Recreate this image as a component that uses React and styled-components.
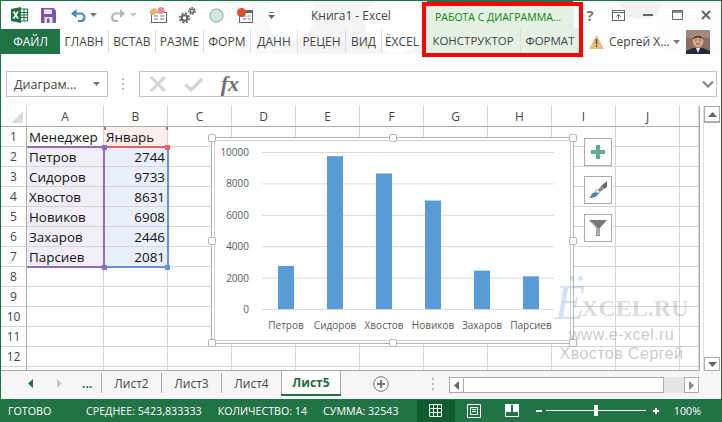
import React from 'react';
import styled, { createGlobalStyle } from 'styled-components';

const green = '#217346';
const ui = '"Open Sans", "Noto Sans", sans-serif';

const GlobalStyle = createGlobalStyle`
  html, body { margin: 0; padding: 0; background: #fff; }
  * { box-sizing: border-box; }
`;

const Page = styled.div`
  width: 722px;
  height: 422px;
  display: flex;
  flex-direction: column;
  overflow: hidden;
  border: 1px solid ${green};
  border-bottom: none;
  font-family: ${ui};
  color: #444;
  background: #fff;
`;

const Header = styled.header`
  display: flex;
  height: 53px;
  flex: none;
  background:
    radial-gradient(circle at 290px 14px, #fff 0 24px, transparent 25px),
    radial-gradient(circle at 395px 22px, #fff 0 30px, transparent 31px),
    radial-gradient(circle at 640px -4px, #f1f1f1 0 22px, transparent 23px),
    radial-gradient(ellipse at 690px 60px, #f2f2f2 0 40px, transparent 41px),
    linear-gradient(to right, #fff 210px, #f5f5f5 300px, #f4f4f4 420px, #fff 560px, #fbfbfb);
`;

const HeaderLeft = styled.div`
  width: 421px;
  display: flex;
  flex-direction: column;
`;

const TitleRow = styled.div`
  height: 28px;
  display: flex;
  align-items: center;
  padding-left: 10px;
`;

const Qat = styled.div`
  display: flex;
  align-items: center;
  width: 300px;
  flex: none;
`;

const QatSlot = styled.span`
  display: flex;
  align-items: center;
  margin-left: ${p => p.$gap || 0}px;
  flex: none;
`;

const WindowTitle = styled.div`
  font-size: 12px;
  color: #444;
  white-space: nowrap;
`;

const TabRow = styled.nav`
  height: 25px;
  display: flex;
  align-items: center;
`;

const FileTab = styled.div`
  width: 59px;
  height: 25px;
  display: flex;
  align-items: center;
  justify-content: center;
  background: ${green};
  color: #fff;
  font-size: 12px;
`;

const Tab = styled.div`
  height: 23px;
  width: ${p => p.$w}px;
  flex: none;
  display: flex;
  align-items: center;
  justify-content: center;
  font-size: 12px;
  color: #444;
  white-space: nowrap;
  border-right: ${p => (p.$last ? 'none' : '1px solid #dcdcdc')};
`;

const ContextTab = styled(Tab)`
  font-size: 11.5px;
`;

const ContextGroup = styled.div`
  position: relative;
  width: 161px;
  height: 55px;
  margin-top: 1px;
  flex: none;
  border: 4px solid #f00;
  display: flex;
  flex-direction: column;
  background: #fff;
  z-index: 2;

  &::before {
    content: '';
    position: absolute;
    left: 1px;
    right: 6px;
    top: -6px;
    height: 2px;
    background: ${green};
  }
`;

const ContextTitle = styled.div`
  height: 22px;
  margin-right: 5px;
  padding-left: 9px;
  display: flex;
  align-items: center;
  background: #e6f1e6;
  color: #0a870a;
  font-size: 10.5px;
  white-space: nowrap;
`;

const ContextTabs = styled.div`
  flex: 1;
  display: flex;
  align-items: center;
  background: #e6f1e6;
`;

const HeaderRight = styled.div`
  flex: 1;
  display: flex;
  flex-direction: column;
`;

const WindowButtons = styled.div`
  height: 28px;
  display: flex;
  align-items: center;
`;

const WindowButton = styled.span`
  display: flex;
  align-items: center;
  justify-content: center;
  width: ${p => p.$w}px;
  flex: none;
  color: #777;
  font-size: 15px;
  font-weight: 700;
`;

const UserRow = styled.div`
  height: 25px;
  display: flex;
  align-items: center;
  padding-left: 6px;
`;

const UserName = styled.span`
  font-size: 12px;
  margin-left: 5px;
  width: 64px;
  white-space: nowrap;
  color: #444;
`;

const PortraitBox = styled.span`
  display: flex;
  margin-left: 6px;
`;

const FormulaRow = styled.div`
  height: 26px;
  flex: none;
  margin: 17px 4px 0 5px;
  display: flex;
  align-items: stretch;
`;

const NameBox = styled.div`
  width: 102px;
  flex: none;
  display: flex;
  align-items: center;
  justify-content: space-between;
  padding: 0 7px;
  border: 1px solid #c6c6c6;
  font-size: 12.5px;
  color: #444;
`;

const Grip = styled.div`
  width: 31px;
  flex: none;
  display: flex;
  align-items: center;
  justify-content: center;
`;

const FormulaTools = styled.div`
  width: 110px;
  flex: none;
  display: flex;
  align-items: center;
  justify-content: space-between;
  padding: 0 9px 0 9px;
  border: 1px solid #c6c6c6;
`;

const FxLabel = styled.span`
  font-family: "Liberation Serif", serif;
  font-style: italic;
  font-weight: 700;
  font-size: 22px;
  color: #6f6f6f;
  line-height: 1;
`;

const FormulaInput = styled.div`
  flex: 1;
  margin-left: 4px;
  display: flex;
  align-items: center;
  justify-content: flex-end;
  padding-right: 2px;
  border: 1px solid #c6c6c6;
`;

const Workspace = styled.div`
  height: 265px;
  margin-top: 9px;
  flex: none;
  display: flex;
`;

const Sheet = styled.div`
  position: relative;
  width: 699px;
  flex: none;
  overflow: hidden;
  border-right: 1px solid #ababab;
  border-bottom: 1px solid #ababab;
  font-size: 13.4px;
`;

const HeadRow = styled.div`
  display: flex;
  height: 21px;
  border-bottom: 1px solid #ababab;
`;

const Corner = styled.div`
  width: 26px;
  flex: none;
  display: flex;
  align-items: flex-end;
  justify-content: flex-end;
  padding: 0 3px 3px 0;
  border-right: 1px solid #d4d4d4;
`;

const ColHead = styled.div`
  width: ${p => p.$w}px;
  flex: none;
  display: flex;
  align-items: center;
  justify-content: center;
  font-size: 12px;
  color: #444;
  border-right: 1px solid #d4d4d4;
`;

const Row = styled.div`
  display: flex;
  height: 20px;
`;

const RowHead = styled.div`
  width: 26px;
  flex: none;
  display: flex;
  align-items: center;
  justify-content: center;
  font-size: 12px;
  color: #444;
  border-right: 1px solid #ababab;
  border-bottom: 1px solid #d4d4d4;
`;

const Cell = styled.div`
  width: ${p => p.$w}px;
  flex: none;
  padding: 0 2px;
  display: flex;
  align-items: center;
  justify-content: ${p => (p.$num ? 'flex-end' : 'flex-start')};
  background: ${p => p.$tint || '#fff'};
  color: #111;
  white-space: nowrap;
  border-right: 1px solid #d4d4d4;
  border-bottom: 1px solid #d4d4d4;
`;

const MarkLine = styled.div`
  position: absolute;
  left: ${p => p.$x}px;
  top: ${p => p.$y}px;
  width: ${p => p.$w}px;
  height: ${p => p.$h}px;
  background: ${p => p.$c};
`;

const ChartFrame = styled.div`
  position: absolute;
  left: 210px;
  top: 31px;
  width: 363px;
  height: 207px;
  border: 1px solid #b4b4b4;
  padding: 2px;
  background: #fff;
`;

const ChartInner = styled.div`
  width: 100%;
  height: 100%;
  border: 1px solid #cfcfcf;
  background: #fff;

  svg { display: block; }
  text { font-family: ${ui}; font-size: 10px; fill: #595959; }
`;

const Handle = styled.span`
  position: absolute;
  left: ${p => p.$x}%;
  top: ${p => p.$y}%;
  width: 8px;
  height: 8px;
  margin: -4px 0 0 -4px;
  background: #fff;
  border: 1px solid #b4b4b4;
  border-radius: 2px;
`;

const ChartTools = styled.div`
  position: absolute;
  left: 583px;
  top: 32px;
  display: flex;
  flex-direction: column;
  gap: 10px;
`;

const ToolButton = styled.div`
  width: 28px;
  height: 28px;
  display: flex;
  align-items: center;
  justify-content: center;
  background: #fff;
  border: 1px solid #ababab;
`;

const Watermark = styled.div`
  position: absolute;
  left: 553px;
  top: 177px;
  width: 135px;
  display: flex;
  flex-direction: column;
  align-items: center;
  pointer-events: none;
`;

const WatermarkLogo = styled.div`
  display: flex;
  align-items: flex-end;
  height: 42px;
  font-family: "Liberation Serif", serif;
  font-weight: 700;
  font-size: 24px;
  color: rgba(150, 150, 150, 0.35);
  white-space: nowrap;

  b {
    font-size: 50px;
    line-height: 46px;
    font-style: italic;
    font-weight: 400;
    color: rgba(120, 165, 215, 0.32);
    margin-right: -4px;
  }

  span {
    line-height: 1;
    margin-bottom: 5px;
  }
`;

const WatermarkLine = styled.div`
  font-family: "Liberation Sans", sans-serif;
  font-size: 16px;
  letter-spacing: 0.45px;
  line-height: 19px;
  color: rgba(150, 150, 150, 0.5);
  white-space: nowrap;
`;

const VScroll = styled.div`
  flex: 1;
  margin-left: 3px;
  margin-right: 1px;
  display: flex;
  flex-direction: column;
  border-left: 1px solid #dcdcdc;
`;

const ScrollButton = styled.div`
  width: ${p => p.$w || 16}px;
  height: ${p => p.$h || 16}px;
  flex: none;
  display: flex;
  align-items: center;
  justify-content: center;
  background: #fff;
  border: 1px solid #ababab;
`;

const VThumb = styled.div`
  flex: 1;
  border-top: 1px solid #ababab;
  background: #fff;
`;

const SheetBar = styled.div`
  height: 28px;
  flex: none;
  display: flex;
  align-items: flex-start;
  background: #f6f6f6;
`;

const SheetNav = styled.div`
  width: 100px;
  height: 24px;
  flex: none;
  display: flex;
  align-items: center;
  padding-left: 27px;
  gap: 24px;
  color: ${green};
  font-size: 12px;

  b { margin-left: -4px; }
`;

const SheetTab = styled.div`
  width: 60px;
  flex: none;
  height: ${p => (p.$active ? 25 : 20)}px;
  margin-top: ${p => (p.$active ? 0 : 2)}px;
  display: flex;
  align-items: center;
  justify-content: center;
  font-size: 12px;
  font-weight: ${p => (p.$active ? 700 : 400)};
  color: ${p => (p.$active ? '#1e6b3f' : '#444')};
  background: ${p => (p.$active ? '#fff' : 'transparent')};
  border-left: ${p => (p.$active ? 'none' : '1px solid #ababab')};
  border-bottom: ${p => (p.$active ? `2px solid ${green}` : 'none')};
  box-shadow: ${p => (p.$active ? 'inset 1px 0 #ababab, inset -1px 0 #ababab' : 'none')};
`;

const SheetBarTools = styled.div`
  width: 108px;
  height: 26px;
  flex: none;
  display: flex;
  align-items: center;
  padding-left: 32px;
  gap: 43px;
`;

const HScroll = styled.div`
  width: 250px;
  height: 16px;
  margin-top: 6px;
  flex: none;
  display: flex;
  background: #e6e6e6;
`;

const HThumb = styled.div`
  width: 200px;
  background: #fff;
  border-top: 1px solid #ababab;
  border-bottom: 1px solid #ababab;
  border-right: 1px solid #ababab;
`;

const HTrack = styled.div`
  flex: 1;
`;

const StatusBar = styled.footer`
  height: 23px;
  flex: none;
  margin: 0 -1px;
  display: flex;
  align-items: center;
  background: ${green};
  color: #fff;
  font-size: 10.7px;
  white-space: nowrap;
`;

const StatusReady = styled.span`
  width: 86px;
  padding-left: 8px;
  flex: none;
`;

const StatusItem = styled.span`
  margin-right: 16px;
`;

const ViewGroup = styled.div`
  margin-left: auto;
  display: flex;
  align-items: stretch;
  height: 22px;
`;

const ViewButton = styled.div`
  width: 38px;
  display: flex;
  align-items: center;
  justify-content: center;
  background: ${p => (p.$active ? '#0e5c2f' : 'transparent')};
`;

const Zoom = styled.div`
  display: flex;
  align-items: center;
  width: 123px;
  margin-left: 5px;
  height: 22px;
`;

const ZoomTrack = styled.div`
  position: relative;
  width: 100px;
  height: 1px;
  margin: 0 7px 0 4px;
  background: #fff;
`;

const ZoomThumb = styled.span`
  position: absolute;
  left: 48px;
  top: -5px;
  width: 4px;
  height: 11px;
  background: #fff;
`;

const ZoomSign = styled.span`
  width: 6px;
  height: 2px;
  background: #fff;
  position: relative;

  &::after {
    content: '';
    display: ${p => (p.$plus ? 'block' : 'none')};
    position: absolute;
    left: 2px;
    top: -2px;
    width: 2px;
    height: 6px;
    background: #fff;
  }
`;

const ZoomValue = styled.span`
  margin: 0 21px 0 15px;
`;

const Caret = ({ color = '#777' }) => (
  <svg width="7" height="4" viewBox="0 0 7 4"><path d="M0 0h7L3.5 4z" fill={color} /></svg>
);

const ExcelIcon = () => (
  <svg width="17" height="16" viewBox="0 0 17 16">
    <path d="M0 2 10 0v16L0 14z" fill="#1e7145" />
    <path d="M10 2h6.500v12H10" fill="#fff" stroke="#1e7145" />
    <path d="M10 5.500h6M10 8h6M10 10.500h6M13 2v12" stroke="#1e7145" />
    <path d="M2.500 4.500 7 11.500M7 4.500 2.500 11.500" stroke="#fff" strokeWidth="1.600" />
  </svg>
);

const SaveIcon = () => (
  <svg width="15" height="15" viewBox="0 0 15 15">
    <path d="M0 0h12.500L15 2.500V15H0z" fill="#7d55a8" />
    <rect x="3" y="1.500" width="8" height="4.500" fill="#e9e0f2" />
    <rect x="3.500" y="9" width="8" height="6" fill="#e9e0f2" />
    <rect x="6" y="10.500" width="2.500" height="4.500" fill="#7d55a8" />
  </svg>
);

const UndoIcon = ({ color }) => (
  <svg width="17" height="13" viewBox="0 0 17 13">
    <path d="M2.500 4.500h8a4 4 0 0 1 4 4 4 4 0 0 1-4 3.500H8" fill="none" stroke={color} strokeWidth="2.200" />
    <path d="M6.500 0v9L1 4.500z" fill={color} />
  </svg>
);

const RedoIcon = ({ color }) => (
  <svg width="16" height="13" viewBox="0 0 16 13">
    <path d="M13 4.500H6a4 4 0 0 0-4 4 4 4 0 0 0 4 3.500h2" fill="none" stroke={color} strokeWidth="2.200" />
    <path d="M10 0v9l5-4.500z" fill={color} />
  </svg>
);

const FormIcon = () => (
  <svg width="17" height="16" viewBox="0 0 17 16">
    <rect x="1.500" y="5.500" width="15" height="10" fill="#fff" stroke="#6a6a6a" />
    <path d="M4 9h4M10 9h4M4 12h4M10 12h4" stroke="#777" />
    <path d="M0 3.500 4 1l3 1.500V6L3 8.500 0 6.500z" fill="#e8b869" />
    <circle cx="11" cy="3.500" r="3.500" fill="#ec8ba0" />
  </svg>
);

const GearsIcon = () => (
  <svg width="17" height="17" viewBox="0 0 17 17" fill="none" stroke="#666">
    <circle cx="5.500" cy="11" r="2.800" strokeWidth="2" />
    <circle cx="5.500" cy="11" r="4.600" strokeWidth="1.800" strokeDasharray="2.100 1.500" />
    <circle cx="13" cy="4" r="1.800" strokeWidth="1.500" />
    <circle cx="13" cy="4" r="3.200" strokeWidth="1.500" strokeDasharray="1.700 1.100" />
  </svg>
);

const CircleIcon = () => (
  <svg width="15" height="15" viewBox="0 0 15 15">
    <circle cx="7.500" cy="7.500" r="6.500" fill="#d5e6dc" stroke="#6fae93" />
  </svg>
);

const RecordIcon = () => (
  <svg width="16" height="15" viewBox="0 0 16 15">
    <rect x="2.500" y="2.500" width="13" height="12" fill="#fff" stroke="#666" />
    <rect x="2" y="2" width="14" height="3" fill="#666" />
    <path d="M6 8h3M10.500 8h3M6 11h3M10.500 11h3" stroke="#777" />
    <circle cx="4.500" cy="4.500" r="4.500" fill="#d9502e" />
  </svg>
);

const CustomizeIcon = () => (
  <svg width="7" height="7" viewBox="0 0 7 7">
    <path d="M1 .5h5" stroke="#666" />
    <path d="M0 3h7L3.500 7z" fill="#666" />
  </svg>
);

const PinIcon = () => (
  <svg width="13" height="11" viewBox="0 0 13 11" fill="none" stroke="#666">
    <rect x=".5" y=".5" width="12" height="10" />
    <path d="M.5 2.500h12" />
    <path d="M6.500 9V4.500M4.500 6.500l2-2 2 2" />
  </svg>
);

const WarnIcon = () => (
  <svg width="15" height="14" viewBox="0 0 15 14">
    <path d="M7.500 0 15 14H0z" fill="#e8bd7c" />
    <path d="M6.700 4h1.600v5.500H6.700zM6.700 10.500h1.600V12H6.700z" fill="#555" />
  </svg>
);

const Portrait = () => (
  <svg width="24" height="24" viewBox="0 0 24 24">
    <rect width="24" height="24" fill="#8a6d60" />
    <rect width="24" height="8" fill="#a08a7c" />
    <path d="M0 24v-3l7-3h10l7 3v3z" fill="#1f2a3a" />
    <path d="M10 18h4l-2 5z" fill="#e8e8ee" />
    <ellipse cx="12" cy="11" rx="5.500" ry="6.500" fill="#d7a68c" />
    <path d="M6.500 10c0-6 11-6 11 0-2-3-9-3-11 0z" fill="#5a4030" />
    <path d="M9 10h2M13 10h2M10 14h4" stroke="#6c4636" strokeWidth=".8" />
  </svg>
);

const CrossIcon = () => (
  <svg width="18" height="16" viewBox="0 0 18 16">
    <path d="M2 1l14 14M16 1 2 15" stroke="#d4d4d4" strokeWidth="3" />
  </svg>
);

const CheckIcon = () => (
  <svg width="19" height="15" viewBox="0 0 19 15">
    <path d="M1.500 7.500 7 13 18 2" fill="none" stroke="#d4d4d4" strokeWidth="3.400" />
  </svg>
);

const PlusIcon = () => (
  <svg width="14" height="14" viewBox="0 0 14 14">
    <path d="M5 0h4v5h5v4H9v5H5V9H0V5h5z" fill="#5fa98c" />
  </svg>
);

const BrushIcon = () => (
  <svg width="18" height="18" viewBox="0 0 18 18">
    <path d="M18 0v6l-3 2-3-3z" fill="#666" />
    <path d="M12 5l3 3-4 3-2-2z" fill="#8c8c8c" />
    <path d="M8 10c1-1 3 1 2 2-1 3-5 5-10 5 2-1 2-4 4-5 1-1 3 0 4-2z" fill="#4f81bd" />
    <circle cx="8.500" cy="10.500" r="1.800" fill="#fff" stroke="#777" strokeWidth=".8" />
  </svg>
);

const FunnelIcon = () => (
  <svg width="18" height="16" viewBox="0 0 18 16">
    <path d="M0 0h18l-7 8v8H7V8z" fill="#777" />
    <path d="M3 2.500 8 8v7h2V8" fill="none" stroke="#ddd" strokeWidth=".9" />
  </svg>
);

const ArrowIcon = ({ dir, color = '#666' }) => {
  const d = { up: 'M0 5 4.500 0 9 5z', down: 'M0 0h9L4.500 5z', left: 'M5 0v9L0 4.500z', right: 'M0 0v9l5-4.500z' }[dir];
  const vertical = dir === 'up' || dir === 'down';
  return (
    <svg width={vertical ? 9 : 5} height={vertical ? 5 : 9} viewBox={vertical ? '0 0 9 5' : '0 0 5 9'}>
      <path d={d} fill={color} />
    </svg>
  );
};

const AddSheetIcon = () => (
  <svg width="16" height="16" viewBox="0 0 16 16" fill="none" stroke="#777">
    <circle cx="8" cy="8" r="7.300" />
    <path d="M8 4v8M4 8h8" strokeWidth="2" />
  </svg>
);

const Dots = () => (
  <svg width="3" height="12" viewBox="0 0 3 12" fill="#bdbdbd">
    <rect y="0" width="2" height="2" /><rect y="5" width="2" height="2" /><rect y="10" width="2" height="2" />
  </svg>
);

const GridView = () => (
  <svg width="13" height="13" viewBox="0 0 13 13" fill="none" stroke="#fff">
    <path d="M.5.5h12v12H.5zM4.500.5v12M8.500.5v12M.5 4.500h12M.5 8.500h12" />
  </svg>
);

const PageView = () => (
  <svg width="14" height="14" viewBox="0 0 14 14" fill="none" stroke="#fff">
    <path d="M.5.5h13v13H.5zM3.500 3.500h7v7h-7zM5 5.500h4M5 7.500h4" />
  </svg>
);

const BreakView = () => (
  <svg width="14" height="13" viewBox="0 0 14 13">
    <path d="M.5.5h13v12H.5z" fill="none" stroke="#fff" />
    <path d="M1 1h5v7H1zM8 1h5v7H8z" fill="#fff" />
  </svg>
);

const columns = [
  ['A', 77], ['B', 64], ['C', 64], ['D', 64], ['E', 64], ['F', 64],
  ['G', 64], ['H', 64], ['I', 64], ['J', 64], ['', 19],
];

const people = [
  ['Менеджер', 'Январь'],
  ['Петров', 2744],
  ['Сидоров', 9733],
  ['Хвостов', 8631],
  ['Новиков', 6908],
  ['Захаров', 2446],
  ['Парсиев', 2081],
];

const series = people.slice(1);

const tint = (col, row) => {
  if (row > 6) return null;
  if (col === 0) return row === 0 ? null : '#f1eef8';
  if (col === 1) return row === 0 ? '#fdeeee' : '#e9f0fb';
  return null;
};

const marks = [
  ['#8e6cc0', 26, 40, 77, 2], ['#8e6cc0', 26, 160, 77, 2], ['#8e6cc0', 102, 44, 2, 116],
  ['#e2626a', 106, 40, 61, 2], ['#e2626a', 103, 21, 2, 3], ['#e2626a', 165, 21, 2, 3],
  ['#6a8fdf', 106, 160, 61, 2], ['#6a8fdf', 166, 44, 2, 116],
  ['#8e6cc0', 101, 39, 5, 5], ['#8e6cc0', 101, 159, 5, 5],
  ['#e2626a', 164, 39, 5, 5], ['#6a8fdf', 164, 159, 5, 5],
];

const handles = [[0, 0], [50, 0], [100, 0], [0, 50], [100, 50], [0, 100], [50, 100], [100, 100]];

const sheetTabs = ['Лист2', 'Лист3', 'Лист4'];

function Chart() {
  const base = 309;
  const scale = 157 / 10000;
  return (
    <svg width="355" height="199" viewBox="215 141 355 199">
      {[0, 2000, 4000, 6000, 8000, 10000].map(v => {
        const y = base - v * scale;
        return (
          <g key={v}>
            <path d={`M262 ${y + 0.5}H554`} stroke="#d9d9d9" />
            <text x="249" y={y + 4} textAnchor="end">{v}</text>
          </g>
        );
      })}
      {series.map(([name, value], i) => (
        <g key={name}>
          <rect x={278 + 49 * i} y={base - value * scale} width="16" height={value * scale} fill="#5b9bd5" />
          <text x={286 + 49 * i} y="329" textAnchor="middle">{name}</text>
        </g>
      ))}
    </svg>
  );
}

export default function App() {
  return (
    <Page>
      <GlobalStyle />
      <Header>
        <HeaderLeft>
          <TitleRow>
            <Qat>
              <QatSlot><ExcelIcon /></QatSlot>
              <QatSlot $gap={13}><SaveIcon /></QatSlot>
              <QatSlot $gap={14}><UndoIcon color="#4a86c5" /></QatSlot>
              <QatSlot $gap={3}><Caret /></QatSlot>
              <QatSlot $gap={13}><RedoIcon color="#b8b8b8" /></QatSlot>
              <QatSlot $gap={4}><Caret color="#c4c4c4" /></QatSlot>
              <QatSlot $gap={13}><FormIcon /></QatSlot>
              <QatSlot $gap={12}><GearsIcon /></QatSlot>
              <QatSlot $gap={13}><CircleIcon /></QatSlot>
              <QatSlot $gap={13}><RecordIcon /></QatSlot>
              <QatSlot $gap={15}><CustomizeIcon /></QatSlot>
            </Qat>
            <WindowTitle>Книга1 - Excel</WindowTitle>
          </TitleRow>
          <TabRow>
            <FileTab>ФАЙЛ</FileTab>
            <Tab $w={49}>ГЛАВН</Tab>
            <Tab $w={47}>ВСТАВ</Tab>
            <Tab $w={48}>РАЗМЕ</Tab>
            <Tab $w={47}>ФОРМ</Tab>
            <Tab $w={47}>ДАНН</Tab>
            <Tab $w={48}>РЕЦЕН</Tab>
            <Tab $w={36}>ВИД</Tab>
            <Tab $w={40} $last>ЁXCEL</Tab>
          </TabRow>
        </HeaderLeft>
        <ContextGroup>
          <ContextTitle>РАБОТА С ДИАГРАММА...</ContextTitle>
          <ContextTabs>
            <ContextTab $w={95}>КОНСТРУКТОР</ContextTab>
            <ContextTab $w={58} $last>ФОРМАТ</ContextTab>
          </ContextTabs>
        </ContextGroup>
        <HeaderRight>
          <WindowButtons>
            <WindowButton $w={14}>?</WindowButton>
            <WindowButton $w={42}><PinIcon /></WindowButton>
            <WindowButton $w={18}>
              <svg width="10" height="2"><rect width="10" height="2" fill="#666" /></svg>
            </WindowButton>
            <WindowButton $w={40}>
              <svg width="11" height="10" fill="none" stroke="#666">
                <path d="M.5.5h10v9H.5z" /><path d="M0 2h11" strokeWidth="1.500" />
              </svg>
            </WindowButton>
            <WindowButton $w={18}>
              <svg width="10" height="10"><path d="M1 1l8 8M9 1 1 9" stroke="#666" strokeWidth="2" /></svg>
            </WindowButton>
          </WindowButtons>
          <UserRow>
            <WarnIcon />
            <UserName>Сергей Х...</UserName>
            <Caret />
            <PortraitBox><Portrait /></PortraitBox>
          </UserRow>
        </HeaderRight>
      </Header>

      <FormulaRow>
        <NameBox>
          Диаграм...
          <Caret />
        </NameBox>
        <Grip><Dots /></Grip>
        <FormulaTools>
          <CrossIcon />
          <CheckIcon />
          <FxLabel>fx</FxLabel>
        </FormulaTools>
        <FormulaInput>
          <svg width="12" height="9" viewBox="0 0 12 9">
            <path d="M1 1.500 6 6.500l5-5" fill="none" stroke="#8a8a8a" strokeWidth="2.400" />
          </svg>
        </FormulaInput>
      </FormulaRow>

      <Workspace>
        <Sheet>
          <HeadRow>
            <Corner>
              <svg width="12" height="12"><path d="M12 0v12H0z" fill="#dcdcdc" /></svg>
            </Corner>
            {columns.map(([name, w]) => <ColHead key={w + name} $w={w}>{name}</ColHead>)}
          </HeadRow>
          {Array.from({ length: 13 }, (_, r) => (
            <Row key={r}>
              <RowHead>{r < 12 ? r + 1 : ''}</RowHead>
              {columns.map(([name, w], c) => {
                const value = people[r] && c < 2 ? people[r][c] : '';
                return (
                  <Cell key={w + name} $w={w} $tint={tint(c, r)} $num={typeof value === 'number'}>
                    {value}
                  </Cell>
                );
              })}
            </Row>
          ))}
          {marks.map(([c, x, y, w, h]) => (
            <MarkLine key={`${x}-${y}-${c}`} $c={c} $x={x} $y={y} $w={w} $h={h} />
          ))}
          <ChartFrame>
            <ChartInner><Chart /></ChartInner>
            {handles.map(([x, y]) => <Handle key={`${x}-${y}`} $x={x} $y={y} />)}
          </ChartFrame>
          <ChartTools>
            <ToolButton><PlusIcon /></ToolButton>
            <ToolButton><BrushIcon /></ToolButton>
            <ToolButton><FunnelIcon /></ToolButton>
          </ChartTools>
          <Watermark>
            <WatermarkLogo><b>Ё</b><span>XCEL.RU</span></WatermarkLogo>
            <WatermarkLine>www.e-xcel.ru</WatermarkLine>
            <WatermarkLine>Хвостов Сергей</WatermarkLine>
          </Watermark>
        </Sheet>
        <VScroll>
          <ScrollButton $h={16}><ArrowIcon dir="up" /></ScrollButton>
          <VThumb />
          <ScrollButton $h={14}><ArrowIcon dir="down" /></ScrollButton>
        </VScroll>
      </Workspace>

      <SheetBar>
        <SheetNav>
          <ArrowIcon dir="left" color={green} />
          <ArrowIcon dir="right" color="#c6c6c6" />
          <b>...</b>
        </SheetNav>
        {sheetTabs.map(name => <SheetTab key={name}>{name}</SheetTab>)}
        <SheetTab $active>Лист5</SheetTab>
        <SheetBarTools>
          <AddSheetIcon />
          <Dots />
        </SheetBarTools>
        <HScroll>
          <ScrollButton $w={15} $h={16}><ArrowIcon dir="left" /></ScrollButton>
          <HThumb />
          <HTrack />
          <ScrollButton $w={15} $h={16}><ArrowIcon dir="right" color="#8a8a8a" /></ScrollButton>
        </HScroll>
      </SheetBar>

      <StatusBar>
        <StatusReady>ГОТОВО</StatusReady>
        <StatusItem>СРЕДНЕЕ: 5423,833333</StatusItem>
        <StatusItem>КОЛИЧЕСТВО: 14</StatusItem>
        <StatusItem>СУММА: 32543</StatusItem>
        <ViewGroup>
          <ViewButton $active><GridView /></ViewButton>
          <ViewButton><PageView /></ViewButton>
          <ViewButton><BreakView /></ViewButton>
        </ViewGroup>
        <Zoom>
          <ZoomSign />
          <ZoomTrack><ZoomThumb /></ZoomTrack>
          <ZoomSign $plus />
        </Zoom>
        <ZoomValue>100%</ZoomValue>
      </StatusBar>
    </Page>
  );
}
